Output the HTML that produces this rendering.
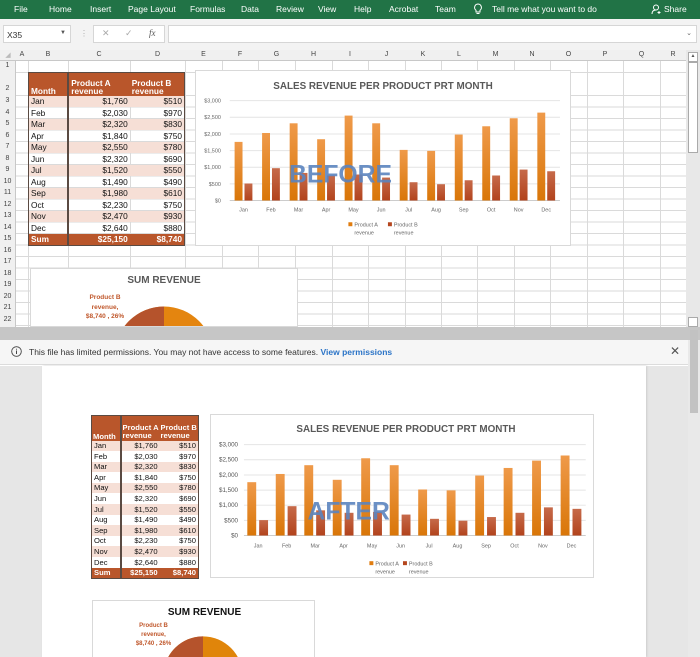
<!DOCTYPE html>
<html><head><meta charset="utf-8"><style>
*{margin:0;padding:0;box-sizing:border-box}
body{width:700px;height:657px;overflow:hidden;position:relative;font-family:"Liberation Sans",sans-serif;background:#fff}
.a{position:absolute}
.rib{left:0;top:0;width:700px;height:19px;background:#217346;color:#fff;font-size:8.5px}
.rib span{position:absolute;top:4px}
.fb{left:0;top:19px;width:700px;height:31px;background:#f3f3f3}
.hdr{left:0;top:50px;width:686px;height:11px;background:#f0f0f0;border-bottom:1px solid #c8c8c8;font-size:7px;color:#444}
.hdr span{position:absolute;top:1px;text-align:center}
.rn{left:0;top:61px;width:16px;height:266px;background:#f0f0f0;border-right:1px solid #c8c8c8;font-size:7px;color:#444}
.rn span{position:absolute;left:0;width:15px;text-align:center}
.vl{position:absolute;top:61px;width:1px;height:266px;background:#dadada}
.hl{position:absolute;left:16px;width:670px;height:1px;background:#dadada}
table{border-collapse:collapse;position:absolute;font-size:8.3px;color:#111}
td{padding:0 2px;white-space:nowrap;line-height:1}
.hd td{background:#b9562b;color:#fff;font-weight:bold;vertical-align:bottom}
.sm td{background:#b9562b;color:#fff;font-weight:bold}
.p td{background:#f6dfd6}
td.r{text-align:right}
td.m{border-right:2px solid #5a4a42}
</style></head><body>
<div class="a rib">
<span style="left:14px">File</span><span style="left:49px">Home</span><span style="left:90px">Insert</span><span style="left:128px">Page Layout</span><span style="left:190px">Formulas</span><span style="left:241px">Data</span><span style="left:276px">Review</span><span style="left:318px">View</span><span style="left:354px">Help</span><span style="left:389px">Acrobat</span><span style="left:435px">Team</span>
<svg class="a" style="left:473px;top:3px" width="10" height="13" viewBox="0 0 10 13"><path d="M5 1a3.5 3.5 0 0 0-2 6.3V9h4V7.3A3.5 3.5 0 0 0 5 1zM3.5 10.5h3" fill="none" stroke="#fff" stroke-width="1"/></svg>
<span style="left:492px">Tell me what you want to do</span>
<svg class="a" style="left:651px;top:4px" width="11" height="11" viewBox="0 0 11 11"><circle cx="5" cy="3.5" r="2.5" fill="none" stroke="#fff"/><path d="M1 10c0-3 2-4 4-4M8 7v3M6.5 8.5h3" fill="none" stroke="#fff"/></svg>
<span style="left:664px">Share</span>
</div>
<div class="a fb">
<div class="a" style="left:3px;top:6px;width:68px;height:18px;background:#fff;border:1px solid #d6d6d6;font-size:8.5px;padding:4px 3px;color:#333">X35<span style="position:absolute;right:4px;top:4px;font-size:6px;color:#555">▼</span></div>
<div class="a" style="left:80px;top:10px;font-size:8px;color:#aaa">⋮</div>
<div class="a" style="left:93px;top:6px;width:72px;height:18px;background:#fff;border:1px solid #d6d6d6;font-size:9px;color:#aaa"><span class="a" style="left:8px;top:2px">✕</span><span class="a" style="left:31px;top:2px">✓</span><span class="a" style="left:55px;top:2px;color:#555;font-style:italic;font-family:'Liberation Serif',serif">fx</span></div>
<div class="a" style="left:168px;top:6px;width:529px;height:18px;background:#fff;border:1px solid #d6d6d6"><span class="a" style="right:4px;top:3px;font-size:7px;color:#666">⌄</span></div>
</div>
<div class="a hdr">
<span style="left:0;width:16px;color:#bbb">◢</span><span style="left:16px;width:12px">A</span><span style="left:28px;width:40px">B</span><span style="left:68px;width:62px">C</span><span style="left:130px;width:55px">D</span><span style="left:185px;width:37px">E</span><span style="left:222px;width:36px">F</span><span style="left:258px;width:37px">G</span><span style="left:295px;width:37px">H</span><span style="left:332px;width:36px">I</span><span style="left:368px;width:37px">J</span><span style="left:405px;width:36px">K</span><span style="left:441px;width:36px">L</span><span style="left:477px;width:37px">M</span><span style="left:514px;width:36px">N</span><span style="left:550px;width:37px">O</span><span style="left:587px;width:36px">P</span><span style="left:623px;width:37px">Q</span><span style="left:660px;width:26px">R</span>
</div>
<div class="a rn">
<span style="top:1px">1</span><span style="top:24px">2</span><span style="top:36px">3</span><span style="top:47.5px">4</span><span style="top:59px">5</span><span style="top:70.5px">6</span><span style="top:82px">7</span><span style="top:93.5px">8</span><span style="top:105px">9</span><span style="top:116.5px">10</span><span style="top:128px">11</span><span style="top:139.5px">12</span><span style="top:151px">13</span><span style="top:162.5px">14</span><span style="top:174px">15</span><span style="top:185.5px">16</span><span style="top:197px">17</span><span style="top:208.5px">18</span><span style="top:220px">19</span><span style="top:231.5px">20</span><span style="top:243px">21</span><span style="top:254.5px">22</span>
</div>
<div class="vl" style="left:28px"></div><div class="vl" style="left:68px"></div><div class="vl" style="left:130px"></div><div class="vl" style="left:185px"></div><div class="vl" style="left:222px"></div><div class="vl" style="left:258px"></div><div class="vl" style="left:295px"></div><div class="vl" style="left:332px"></div><div class="vl" style="left:368px"></div><div class="vl" style="left:405px"></div><div class="vl" style="left:441px"></div><div class="vl" style="left:477px"></div><div class="vl" style="left:514px"></div><div class="vl" style="left:550px"></div><div class="vl" style="left:587px"></div><div class="vl" style="left:623px"></div><div class="vl" style="left:660px"></div>
<div class="hl" style="top:72px"></div>
<div class="a" style="left:16px;top:95px;width:670px;height:232px;background:repeating-linear-gradient(to bottom,#dadada 0,#dadada 1px,transparent 1px,transparent 11.5px)"></div>
<div class="a" style="left:686px;top:50px;width:14px;height:277px;background:#e8e8e8"></div>
<div class="a" style="left:688px;top:52px;width:10px;height:10px;background:#fff;border:1px solid #aaa;font-size:5px;text-align:center;color:#555">▲</div>
<div class="a" style="left:688px;top:62px;width:10px;height:91px;background:#fff;border:1px solid #aaa"></div>
<div class="a" style="left:688px;top:317px;width:10px;height:10px;background:#fff;border:1px solid #aaa"></div>

<table style="left:28px;top:72px;width:157px;border:1px solid #5a4a42">
<colgroup><col style="width:40px"><col style="width:62px"><col style="width:55px"></colgroup>
<tr class="hd" style="height:23px"><td class="m">Month</td><td>Product A<br>revenue</td><td>Product B<br>revenue</td></tr>
<tr class="p" style="height:11.5px"><td class="m">Jan</td><td class="r">$1,760</td><td class="r">$510</td></tr>
<tr style="height:11.5px"><td class="m">Feb</td><td class="r">$2,030</td><td class="r">$970</td></tr>
<tr class="p" style="height:11.5px"><td class="m">Mar</td><td class="r">$2,320</td><td class="r">$830</td></tr>
<tr style="height:11.5px"><td class="m">Apr</td><td class="r">$1,840</td><td class="r">$750</td></tr>
<tr class="p" style="height:11.5px"><td class="m">May</td><td class="r">$2,550</td><td class="r">$780</td></tr>
<tr style="height:11.5px"><td class="m">Jun</td><td class="r">$2,320</td><td class="r">$690</td></tr>
<tr class="p" style="height:11.5px"><td class="m">Jul</td><td class="r">$1,520</td><td class="r">$550</td></tr>
<tr style="height:11.5px"><td class="m">Aug</td><td class="r">$1,490</td><td class="r">$490</td></tr>
<tr class="p" style="height:11.5px"><td class="m">Sep</td><td class="r">$1,980</td><td class="r">$610</td></tr>
<tr style="height:11.5px"><td class="m">Oct</td><td class="r">$2,230</td><td class="r">$750</td></tr>
<tr class="p" style="height:11.5px"><td class="m">Nov</td><td class="r">$2,470</td><td class="r">$930</td></tr>
<tr style="height:11.5px"><td class="m">Dec</td><td class="r">$2,640</td><td class="r">$880</td></tr>
<tr class="sm" style="height:11.5px"><td class="m">Sum</td><td class="r">$25,150</td><td class="r">$8,740</td></tr>
</table>

<svg class="a" style="left:0;top:0" width="0" height="0"><defs>
<linearGradient id="ga" x1="0" y1="0" x2="0" y2="1"><stop offset="0" stop-color="#ef9a4a"/><stop offset="1" stop-color="#d97608"/></linearGradient>
<linearGradient id="gb" x1="0" y1="0" x2="0" y2="1"><stop offset="0" stop-color="#c66a4a"/><stop offset="1" stop-color="#b2431c"/></linearGradient>
</defs></svg>

<svg class="a" style="left:195px;top:70px;background:#fff;border:1px solid #d9d9d9" width="376" height="176" viewBox="0 0 376 176" font-family="Liberation Sans, sans-serif">
<text x="188" y="18" text-anchor="middle" font-size="10" font-weight="bold" fill="#595959">SALES REVENUE PER PRODUCT PRT MONTH</text>
<g stroke="#e4e4e4" stroke-width="1"><line x1="33" x2="367" y1="30" y2="30"/><line x1="33" x2="367" y1="46.8" y2="46.8"/><line x1="33" x2="367" y1="63.7" y2="63.7"/><line x1="33" x2="367" y1="80.5" y2="80.5"/><line x1="33" x2="367" y1="97.3" y2="97.3"/><line x1="33" x2="367" y1="114.2" y2="114.2"/><line x1="33" x2="367" y1="131" y2="131" stroke="#ccc"/></g>
<g font-size="5.5" fill="#666" text-anchor="end"><text x="24" y="32">$3,000</text><text x="24" y="48.8">$2,500</text><text x="24" y="65.7">$2,000</text><text x="24" y="82.5">$1,500</text><text x="24" y="99.3">$1,000</text><text x="24" y="116.2">$500</text><text x="24" y="133">$0</text></g>
<g fill="url(#ga)">
<rect x="37.9" y="71.7" width="8" height="59.3"/><rect x="65.7" y="62.7" width="8" height="68.3"/><rect x="93.6" y="52.9" width="8" height="78.1"/><rect x="121.4" y="69" width="8" height="62"/><rect x="149.2" y="45.1" width="8" height="85.9"/><rect x="177.1" y="52.9" width="8" height="78.1"/><rect x="204.9" y="79.8" width="8" height="51.2"/><rect x="232.7" y="80.8" width="8" height="50.2"/><rect x="260.6" y="64.3" width="8" height="66.7"/><rect x="288.4" y="55.9" width="8" height="75.1"/><rect x="316.2" y="47.8" width="8" height="83.2"/><rect x="344.1" y="42.1" width="8" height="88.9"/></g>
<g fill="url(#gb)">
<rect x="47.9" y="113.8" width="8" height="17.2"/><rect x="75.7" y="98.3" width="8" height="32.7"/><rect x="103.6" y="103.1" width="8" height="27.9"/><rect x="131.4" y="105.7" width="8" height="25.3"/><rect x="159.2" y="104.7" width="8" height="26.3"/><rect x="187.1" y="107.8" width="8" height="23.2"/><rect x="214.9" y="112.5" width="8" height="18.5"/><rect x="242.7" y="114.5" width="8" height="16.5"/><rect x="270.6" y="110.5" width="8" height="20.5"/><rect x="298.4" y="105.7" width="8" height="25.3"/><rect x="326.2" y="99.7" width="8" height="31.3"/><rect x="354.1" y="101.4" width="8" height="29.6"/></g>
<g font-size="5.5" fill="#666" text-anchor="middle"><text x="46.9" y="142">Jan</text><text x="74.7" y="142">Feb</text><text x="102.6" y="142">Mar</text><text x="130.4" y="142">Apr</text><text x="158.2" y="142">May</text><text x="186.1" y="142">Jun</text><text x="213.9" y="142">Jul</text><text x="241.7" y="142">Aug</text><text x="269.6" y="142">Sep</text><text x="297.4" y="142">Oct</text><text x="325.2" y="142">Nov</text><text x="353.1" y="142">Dec</text></g>
<rect x="153" y="153" width="4" height="4" fill="#e07d10"/><text x="159" y="157.5" font-size="5.5" fill="#666">Product A</text><text x="159" y="165.5" font-size="5.5" fill="#666">revenue</text>
<rect x="193" y="153" width="4" height="4" fill="#b5461e"/><text x="199" y="157.5" font-size="5.5" fill="#666">Product B</text><text x="199" y="165.5" font-size="5.5" fill="#666">revenue</text>
<text x="145" y="113" text-anchor="middle" font-size="25" font-weight="bold" fill="#5b84bf" fill-opacity="0.9">BEFORE</text>
</svg>

<div class="a" style="left:30px;top:268px;width:268px;height:59px;background:#fff;border:1px solid #d9d9d9;overflow:hidden">
<div class="a" style="left:0;top:6px;width:266px;text-align:center;font-size:10px;font-weight:bold;color:#595959">SUM REVENUE</div>
<div class="a" style="left:44px;top:24px;width:60px;text-align:center;font-size:6.5px;font-weight:bold;color:#c0582c;line-height:9.5px">Product B<br>revenue,<br>$8,740 , 26%</div>
<svg class="a" style="left:83px;top:37px" width="100" height="100" viewBox="-50 -50 100 100"><circle r="49.5" fill="#e4850f"/><path d="M0 0V-49.5A49.5 49.5 0 0 0 -49.4 -3.1Z" fill="#b5532c"/></svg>
</div>

<div class="a" style="left:0;top:327px;width:700px;height:13px;background:#c6c6c6"></div>
<div class="a" style="left:0;top:340px;width:688px;height:25px;background:#f6f6f6;border-bottom:1px solid #dcdcdc;font-size:8.5px;color:#333">
<svg class="a" style="left:11px;top:6px" width="11" height="11" viewBox="0 0 11 11"><circle cx="5.5" cy="5.5" r="4.8" fill="none" stroke="#444" stroke-width="0.9"/><path d="M5.5 4.5v3.5M5.5 2.8v.8" stroke="#444"/></svg>
<span class="a" style="left:29px;top:7px">This file has limited permissions. You may not have access to some features. <span style="color:#2b74c7;font-weight:bold">View permissions</span></span>
<span class="a" style="left:670px;top:4px;font-size:12px;color:#555">✕</span>
</div>
<div class="a" style="left:0;top:366px;width:688px;height:291px;background:#e6e6e6"></div>
<div class="a" style="left:688px;top:340px;width:12px;height:317px;background:#e9e9e9"></div>
<div class="a" style="left:690px;top:330px;width:8px;height:83px;background:#c2c2c2"></div>
<div class="a" style="left:42px;top:366px;width:604px;height:291px;background:#fff;box-shadow:1px 0 2px #ccc"></div>

<table style="left:91px;top:415px;width:108px;border:1px solid #5a4a42;font-size:7.6px">
<colgroup><col style="width:30px"><col style="width:39px"><col style="width:39px"></colgroup>
<tr class="hd" style="height:25px"><td class="m" style="padding:0 1px">Month</td><td style="padding:0 1px;line-height:1.1">Product A<br>revenue</td><td style="padding:0 1px;line-height:1.1">Product B<br>revenue</td></tr>
<tr class="p" style="height:10.6px"><td class="m">Jan</td><td class="r">$1,760</td><td class="r">$510</td></tr>
<tr style="height:10.6px"><td class="m">Feb</td><td class="r">$2,030</td><td class="r">$970</td></tr>
<tr class="p" style="height:10.6px"><td class="m">Mar</td><td class="r">$2,320</td><td class="r">$830</td></tr>
<tr style="height:10.6px"><td class="m">Apr</td><td class="r">$1,840</td><td class="r">$750</td></tr>
<tr class="p" style="height:10.6px"><td class="m">May</td><td class="r">$2,550</td><td class="r">$780</td></tr>
<tr style="height:10.6px"><td class="m">Jun</td><td class="r">$2,320</td><td class="r">$690</td></tr>
<tr class="p" style="height:10.6px"><td class="m">Jul</td><td class="r">$1,520</td><td class="r">$550</td></tr>
<tr style="height:10.6px"><td class="m">Aug</td><td class="r">$1,490</td><td class="r">$490</td></tr>
<tr class="p" style="height:10.6px"><td class="m">Sep</td><td class="r">$1,980</td><td class="r">$610</td></tr>
<tr style="height:10.6px"><td class="m">Oct</td><td class="r">$2,230</td><td class="r">$750</td></tr>
<tr class="p" style="height:10.6px"><td class="m">Nov</td><td class="r">$2,470</td><td class="r">$930</td></tr>
<tr style="height:10.6px"><td class="m">Dec</td><td class="r">$2,640</td><td class="r">$880</td></tr>
<tr class="sm" style="height:10.6px"><td class="m">Sum</td><td class="r">$25,150</td><td class="r">$8,740</td></tr>
</table>

<svg class="a" style="left:210px;top:414px;background:#fff;border:1px solid #d9d9d9" width="384" height="164" viewBox="0 0 384 164" font-family="Liberation Sans, sans-serif">
<text x="196" y="17" text-anchor="middle" font-size="10" font-weight="bold" fill="#595959">SALES REVENUE PER PRODUCT PRT MONTH</text>
<g stroke="#e4e4e4" stroke-width="1"><line x1="32" x2="378" y1="30" y2="30"/><line x1="32" x2="378" y1="45.3" y2="45.3"/><line x1="32" x2="378" y1="60.7" y2="60.7"/><line x1="32" x2="378" y1="76" y2="76"/><line x1="32" x2="378" y1="91.3" y2="91.3"/><line x1="32" x2="378" y1="106.7" y2="106.7"/><line x1="32" x2="378" y1="122" y2="122" stroke="#ccc"/></g>
<g font-size="6.3" fill="#555" text-anchor="end"><text x="26" y="32">$3,000</text><text x="26" y="47.3">$2,500</text><text x="26" y="62.7">$2,000</text><text x="26" y="78">$1,500</text><text x="26" y="93.3">$1,000</text><text x="26" y="108.7">$500</text><text x="26" y="124">$0</text></g>
<g fill="url(#ga)">
<rect x="35.4" y="68" width="9" height="54"/><rect x="64.2" y="59.7" width="9" height="62.3"/><rect x="93.1" y="50.8" width="9" height="71.2"/><rect x="121.9" y="65.6" width="9" height="56.4"/><rect x="150.7" y="43.8" width="9" height="78.2"/><rect x="179.6" y="50.8" width="9" height="71.2"/><rect x="208.4" y="75.4" width="9" height="46.6"/><rect x="237.2" y="76.3" width="9" height="45.7"/><rect x="266.1" y="61.3" width="9" height="60.7"/><rect x="294.9" y="53.6" width="9" height="68.4"/><rect x="323.7" y="46.2" width="9" height="75.8"/><rect x="352.6" y="41" width="9" height="81"/></g>
<g fill="url(#gb)">
<rect x="47.4" y="106.4" width="9" height="15.6"/><rect x="76.2" y="92.3" width="9" height="29.7"/><rect x="105.1" y="96.5" width="9" height="25.5"/><rect x="133.9" y="99" width="9" height="23"/><rect x="162.7" y="98.1" width="9" height="23.9"/><rect x="191.6" y="100.8" width="9" height="21.2"/><rect x="220.4" y="105.1" width="9" height="16.9"/><rect x="249.2" y="107" width="9" height="15"/><rect x="278.1" y="103.3" width="9" height="18.7"/><rect x="306.9" y="99" width="9" height="23"/><rect x="335.7" y="93.5" width="9" height="28.5"/><rect x="364.6" y="95" width="9" height="27"/></g>
<g font-size="5.5" fill="#666" text-anchor="middle"><text x="46.4" y="134">Jan</text><text x="75.2" y="134">Feb</text><text x="104.1" y="134">Mar</text><text x="132.9" y="134">Apr</text><text x="161.7" y="134">May</text><text x="190.6" y="134">Jun</text><text x="219.4" y="134">Jul</text><text x="248.2" y="134">Aug</text><text x="277.1" y="134">Sep</text><text x="305.9" y="134">Oct</text><text x="334.7" y="134">Nov</text><text x="363.6" y="134">Dec</text></g>
<rect x="159" y="148" width="4" height="4" fill="#e07d10"/><text x="165" y="152.5" font-size="5.5" fill="#666">Product A</text><text x="165" y="160.5" font-size="5.5" fill="#666">revenue</text>
<rect x="193" y="148" width="4" height="4" fill="#b5461e"/><text x="199" y="152.5" font-size="5.5" fill="#666">Product B</text><text x="199" y="160.5" font-size="5.5" fill="#666">revenue</text>
<text x="138" y="106" text-anchor="middle" font-size="25" font-weight="bold" fill="#5b84bf" fill-opacity="0.9">AFTER</text>
</svg>

<div class="a" style="left:92px;top:600px;width:223px;height:57px;background:#fff;border:1px solid #d9d9d9;border-bottom:none;overflow:hidden">
<div class="a" style="left:0;top:6px;width:223px;text-align:center;font-size:10px;font-weight:bold;color:#111">SUM REVENUE</div>
<div class="a" style="left:33px;top:21px;width:55px;text-align:center;font-size:6px;font-weight:bold;color:#c0582c;line-height:9px">Product B<br>revenue,<br>$8,740 , 26%</div>
<svg class="a" style="left:70px;top:35px" width="80" height="80" viewBox="-50 -50 100 100"><circle r="49.5" fill="#e0850a"/><path d="M0 0V-49.5A49.5 49.5 0 0 0 -49.4 -3.1Z" fill="#b5532c"/></svg>
</div>
</body></html>
